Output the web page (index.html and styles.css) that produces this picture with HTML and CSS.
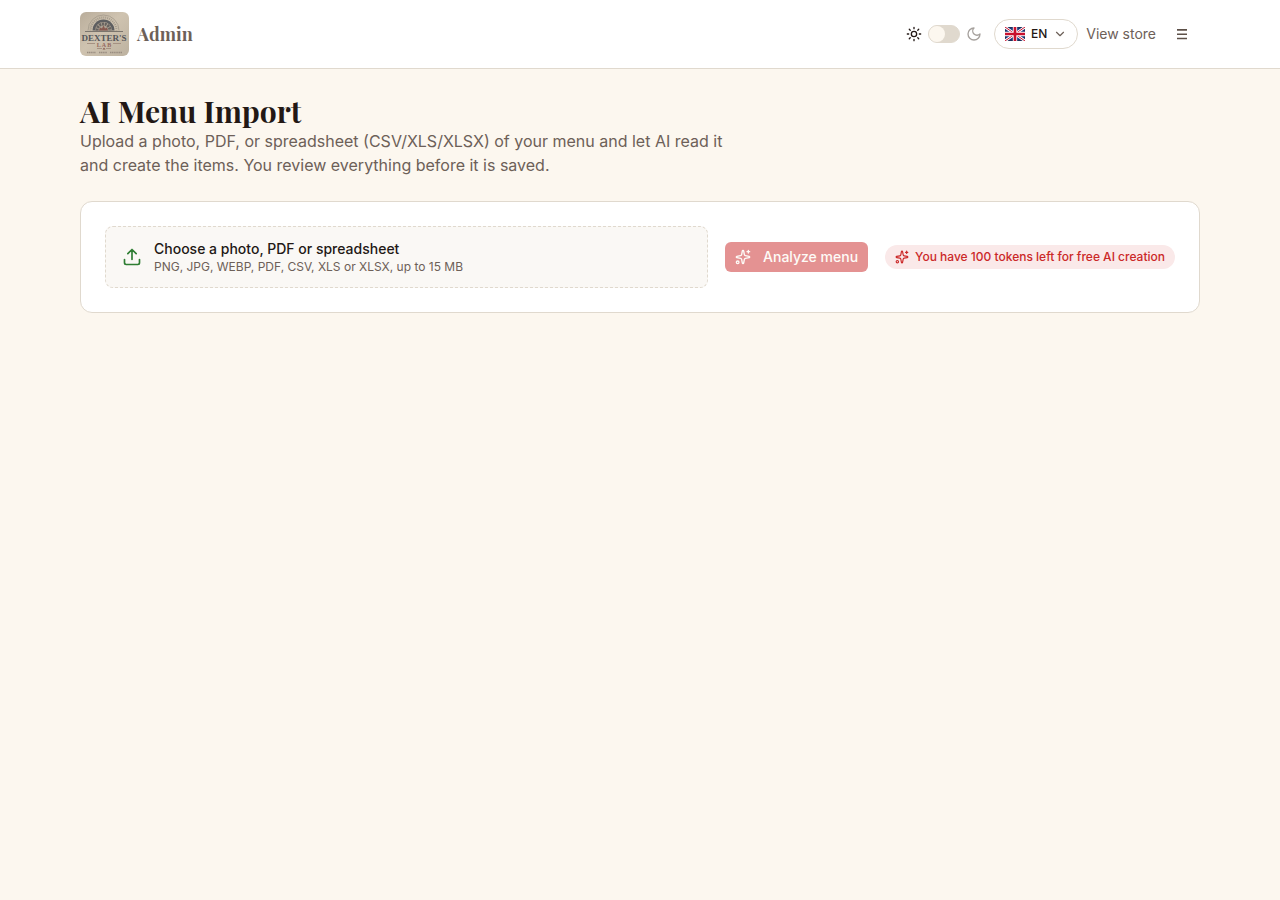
FILE: index.html
```html
<!DOCTYPE html>
<html lang="en">
<head>
<meta charset="utf-8">
<meta name="viewport" content="width=device-width, initial-scale=1">
<title>AI Menu Import</title>
<link rel="stylesheet" href="styles.css">
</head>
<body>
<svg class="symbols" aria-hidden="true">
  <symbol id="sparkles" viewBox="0 0 24 24">
    <path d="M11.017 2.814a1 1 0 0 1 1.966 0l1.051 5.558a2 2 0 0 0 1.594 1.594l5.558 1.051a1 1 0 0 1 0 1.966l-5.558 1.051a2 2 0 0 0-1.594 1.594l-1.051 5.558a1 1 0 0 1-1.966 0l-1.051-5.558a2 2 0 0 0-1.594-1.594l-5.558-1.051a1 1 0 0 1 0-1.966l5.558-1.051a2 2 0 0 0 1.594-1.594z"/>
    <path d="M20 2v4M22 4h-4"/><circle cx="4" cy="20" r="2"/>
  </symbol>
</svg>
<header class="topbar">
  <div class="container topbar-row">
    <a class="brand" href="#">
      <svg class="logo" viewBox="0 0 49 44" role="img" aria-label="Dexter's Lab">
        <defs>
          <linearGradient id="paper" x1="0" y1="0" x2="1" y2="1">
            <stop offset="0" stop-color="#b9ad9b"/><stop offset=".45" stop-color="#cfc3b0"/><stop offset="1" stop-color="#bdb2a0"/>
          </linearGradient>
        </defs>
        <rect width="49" height="44" fill="url(#paper)"/>
        <path d="M8 18.500a15.500 15.500 0 0 1 31 0" fill="none" stroke="#aaa091" stroke-width="1"/>
        <path d="M10.500 18.500a13 13 0 0 1 26 0" fill="none" stroke="#a59b8c" stroke-width="2" stroke-dasharray="1 1"/>
        <path d="M12.500 18.500a11 11 0 0 1 22 0z" fill="#5d5e60"/>
        <path d="M15 18.500a8.500 8.500 0 0 1 17 0z" fill="#aba091"/>
        <path d="M17 18.500a6.500 6.500 0 0 1 13 0" fill="none" stroke="#66625f" stroke-width="3" stroke-dasharray="2 .8"/>
        <path d="M19 18.500l1-3 2 1 1.500-3 1.500 3 2-1 1 3z" fill="#86594f"/>
        <path d="M5 19.500h38" stroke="#7b756d" stroke-width="1"/>
        <text x="24" y="29" class="logo-name" text-anchor="middle">DEXTER'S</text>
        <text x="24" y="35" class="logo-sub" text-anchor="middle">L A B</text>
        <path d="M7 31.500h8M33 31.500h8M17 36.500h5M26 36.500h5" stroke="#a59182" stroke-width="1"/>
        <path d="M22.500 37.500l1.500-2 1.500 2z" fill="#86594f"/>
        <path d="M7 40.500h9M19 40.500h8M30 40.500h12" stroke="#998d80" stroke-width="1.500" stroke-dasharray="1.300 .5"/>
      </svg>
      <span>Admin</span>
    </a>
    <nav class="tools" aria-label="Admin tools">
      <label class="theme">
        <svg class="icon16 sun" viewBox="0 0 24 24" aria-hidden="true"><circle cx="12" cy="12" r="4"/><path d="M12 2v2M12 20v2M4.930 4.930l1.410 1.410M17.660 17.660l1.410 1.410M2 12h2M20 12h2M6.340 17.660l-1.410 1.410M19.070 4.930l-1.410 1.410"/></svg>
        <input class="switch" type="checkbox" role="switch" aria-label="Dark mode">
        <svg class="icon16 moon" viewBox="0 0 24 24" aria-hidden="true"><path d="M12 3a6 6 0 0 0 9 9 9 9 0 1 1-9-9Z"/></svg>
      </label>
      <button class="lang" type="button" aria-haspopup="listbox">
        <svg class="flag" viewBox="0 0 60 42" aria-hidden="true">
          <rect width="60" height="42" fill="#1b3a7d"/>
          <path d="M0 0l60 42M60 0L0 42" stroke="#fff" stroke-width="8"/>
          <path d="M0 0l60 42M60 0L0 42" stroke="#c8102e" stroke-width="3"/>
          <path d="M30 0v42M0 21h60" stroke="#fff" stroke-width="13"/>
          <path d="M30 0v42M0 21h60" stroke="#c8102e" stroke-width="8"/>
        </svg>
        <span>EN</span>
        <svg class="chevron" viewBox="0 0 24 24" aria-hidden="true"><path d="m6 9 6 6 6-6"/></svg>
      </button>
      <a class="store" href="#">View store</a>
      <button class="menu" type="button" aria-label="Open menu">
        <svg viewBox="0 0 12 12" aria-hidden="true"><path d="M1 1.900h10M1 6.200h10M1 10.500h10"/></svg>
      </button>
    </nav>
  </div>
</header>
<main class="container page">
  <h1>AI Menu Import</h1>
  <p class="lead">Upload a photo, PDF, or spreadsheet (CSV/XLS/XLSX) of your menu and let AI read it and create the items. You review everything before it is saved.</p>
  <form class="card">
    <label class="drop">
      <input class="file" type="file" accept="image/*,.pdf,.csv,.xls,.xlsx">
      <svg class="upload" viewBox="0 0 24 24" aria-hidden="true"><path d="M12 3v12M17 8l-5-5-5 5M21 15v4a2 2 0 0 1-2 2H5a2 2 0 0 1-2-2v-4"/></svg>
      <span class="drop-text">
        <span class="drop-title">Choose a photo, PDF or spreadsheet</span>
        <span class="drop-hint">PNG, JPG, WEBP, PDF, CSV, XLS or XLSX, up to 15 MB</span>
      </span>
    </label>
    <button class="analyze" type="submit" disabled>
      <svg class="icon16" aria-hidden="true"><use href="#sparkles"/></svg>
      <span>Analyze menu</span>
    </button>
    <span class="tokens">
      <svg class="icon14" aria-hidden="true"><use href="#sparkles"/></svg>
      <span>You have 100 tokens left for free AI creation</span>
    </span>
  </form>
</main>
</body>
</html>
```
FILE: styles.css
```css
* { box-sizing: border-box; }

body {
  margin: 0;
  min-height: 100vh;
  background: #fcf7ef;
  color: #231815;
  font-family: Inter, "Liberation Sans", sans-serif;
  font-size: 16px;
  line-height: 24px;
}

svg {
  flex: none;
  fill: none;
  stroke: currentColor;
  stroke-width: 2;
  stroke-linecap: round;
  stroke-linejoin: round;
}

button { font: inherit; cursor: pointer; }
a { color: inherit; text-decoration: none; }

.symbols { position: absolute; width: 0; height: 0; }
.icon16 { width: 16px; height: 16px; }
.icon14 { width: 14px; height: 14px; }

.container {
  max-width: 1152px;
  margin: 0 auto;
  padding: 0 16px;
}

.topbar { background: #fff; border-bottom: 1px solid #e0d9ce; }
.topbar-row {
  display: flex;
  align-items: center;
  justify-content: space-between;
  padding-top: 12px;
  padding-bottom: 12px;
}

.brand {
  display: flex;
  align-items: center;
  gap: 8px;
  color: #6d6058;
  font-family: "Playfair Display", "Liberation Serif", serif;
  font-size: 18px;
  font-weight: 700;
}
.logo {
  width: 49px;
  height: 44px;
  border-radius: 6px;
  stroke: none;
  stroke-linecap: butt;
}
.logo-name { fill: #55565a; font: 700 9px "Liberation Serif", serif; }
.logo-sub { fill: #94685d; font: 700 6px "Liberation Serif", serif; }

.tools { display: flex; align-items: center; gap: 8px; }
.theme { display: flex; align-items: center; gap: 6px; margin-right: 4px; }
.moon { color: #a6a19d; }

.switch {
  appearance: none;
  display: flex;
  align-items: center;
  width: 32px;
  height: 18px;
  margin: 0;
  border: 1px solid #e0d9ce;
  border-radius: 9px;
  background: #e0d9ce;
  cursor: pointer;
}
.switch::before {
  content: "";
  width: 16px;
  height: 16px;
  border-radius: 50%;
  background: #fcf7ef;
}
.switch:checked { justify-content: flex-end; }

.lang {
  display: flex;
  align-items: center;
  gap: 6px;
  height: 30px;
  padding: 0 10px;
  border: 1px solid #e0d9ce;
  border-radius: 15px;
  background: #fff;
  color: #231815;
  font-size: 12px;
  font-weight: 500;
}
.flag { width: 20px; height: 14px; stroke-linecap: butt; }
.chevron { width: 14px; height: 14px; color: #6d6058; }

.store { color: #6d6058; font-size: 14px; line-height: 20px; }
.menu {
  display: flex;
  padding: 12px;
  border: 0;
  background: none;
  color: #5d5048;
}
.menu svg {
  width: 12px;
  height: 12px;
  stroke-width: 1.6;
  stroke-linecap: butt;
}

.page { padding-top: 24px; padding-bottom: 24px; }

h1 {
  margin: 0;
  font-family: "Playfair Display", "Liberation Serif", serif;
  font-size: 30px;
  font-weight: 700;
  line-height: 36px;
}
.lead { max-width: 672px; margin: 0; color: #6d6058; }

.card {
  display: flex;
  align-items: center;
  gap: 17px;
  margin-top: 24px;
  padding: 24px;
  border: 1px solid #e0d9ce;
  border-radius: 12px;
  background: #fff;
}

.drop {
  display: flex;
  flex: 1;
  align-items: center;
  gap: 12px;
  min-width: 0;
  padding: 12px 16px;
  border: 1px dashed #e0d9ce;
  border-radius: 8px;
  background: #faf8f5;
  cursor: pointer;
}
.drop:focus-within { border-color: #2e7d32; }
.file {
  position: absolute;
  width: 1px;
  height: 1px;
  opacity: 0;
}
.upload { width: 20px; height: 20px; color: #2e7d32; }
.drop-text { display: flex; flex-direction: column; }
.drop-title { font-size: 14px; font-weight: 500; line-height: 20px; }
.drop-hint { color: #6d6058; font-size: 12px; line-height: 16px; }

.analyze {
  display: flex;
  align-items: center;
  gap: 12px;
  height: 30px;
  padding: 0 10px;
  border: 0;
  border-radius: 6px;
  background: #cb2828;
  color: #fdf8f0;
  font-size: 14px;
  font-weight: 500;
}
.analyze:disabled { opacity: 0.5; cursor: default; }

.tokens {
  display: flex;
  align-items: center;
  gap: 6px;
  padding: 4px 10px;
  border-radius: 12px;
  background: #fae9e9;
  color: #cb2828;
  font-size: 12px;
  font-weight: 500;
  line-height: 16px;
}

@media (max-width: 900px) {
  .card { flex-direction: column; align-items: stretch; }
  .analyze { justify-content: center; }
  .tokens { align-self: flex-start; }
}
```
